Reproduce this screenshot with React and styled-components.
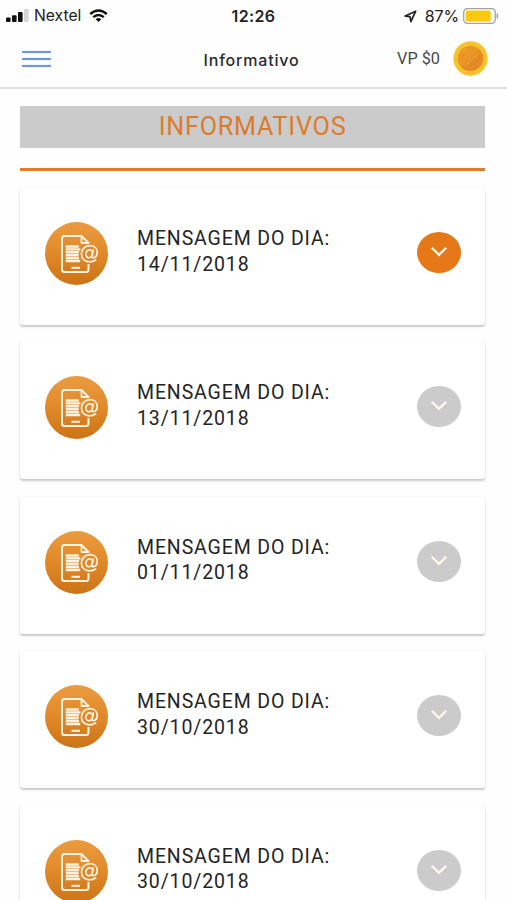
import React from "react";
import styled, { createGlobalStyle } from "styled-components";

const GlobalStyle = createGlobalStyle`
  * { box-sizing: border-box; }
  html, body { margin: 0; background: #fefefe; }
  body { height: 900px; overflow: hidden; font-family: Roboto, "Liberation Sans", sans-serif; }
  svg { display: block; flex: none; }
`;

const Screen = styled.div`
  width: 507px;
  height: 900px;
  overflow: hidden;
  background: #fefefe;
`;

const StatusBar = styled.div`
  display: grid;
  grid-template-columns: 1fr auto 1fr;
  align-items: center;
  height: 32px;
  padding: 0 8px 0 6px;
  font-family: Inter, "Liberation Sans", sans-serif;
  color: #222;
`;

const StatusGroup = styled.div`
  display: flex;
  align-items: center;
  justify-content: ${(p) => p.$align || "flex-start"};
`;

const Carrier = styled.span`
  margin: 0 8px 0 5px;
  font-size: 15.7px;
  line-height: 20px;
`;

const Clock = styled.span`
  padding-left: 2px;
  font-size: 16px;
  line-height: 20px;
  font-weight: 600;
  letter-spacing: 0.4px;
`;

const Percent = styled.span`
  margin: 0 4px 0 8px;
  font-size: 16px;
  line-height: 20px;
  letter-spacing: -0.1px;
`;

const Header = styled.header`
  display: grid;
  grid-template-columns: 1fr auto 1fr;
  align-items: center;
  height: 57px;
  padding: 0 19px 2px 22px;
  border-bottom: 2px solid #e1e1e1;
`;

const MenuButton = styled.button`
  display: flex;
  flex-direction: column;
  gap: 5px;
  width: 29px;
  padding: 0;
  border: 0;
  background: none;
`;

const MenuLine = styled.span`
  height: 2px;
  border-radius: 1px;
  background: #6b97d8;
  box-shadow: 0 0 1px #6b97d8;
`;

const PageName = styled.h1`
  margin: 2px 7px 0 0;
  font: 500 16px/20px Inter, "Liberation Sans", sans-serif;
  letter-spacing: 0.8px;
  color: #2b2b2b;
`;

const Wallet = styled.div`
  display: flex;
  align-items: center;
  justify-content: flex-end;
  gap: 13px;
  font-size: 16.3px;
  line-height: 20px;
  color: #484848;
`;

const Content = styled.main`
  padding: 17px 22px 0 20px;
`;

const Banner = styled.h2`
  display: flex;
  align-items: center;
  justify-content: center;
  height: 42px;
  margin: 0;
  padding-bottom: 2px;
  background: #cbcbcb;
  color: #dc7c2b;
  font-size: 25.2px;
  font-weight: 400;
  letter-spacing: 0.75px;
`;

const Rule = styled.div`
  height: 3px;
  margin: 20px 0 17px;
  background: #dc7e30;
`;

const CardList = styled.div`
  display: flex;
  flex-direction: column;
  gap: 17.4px;
`;

const Card = styled.article`
  display: flex;
  align-items: flex-start;
  height: 137px;
  padding: 34px 24px 0 25px;
  border-radius: 3px;
  background: #fff;
  box-shadow: 0 2px 2px rgba(0, 0, 0, 0.2), 0 0 2px rgba(0, 0, 0, 0.08);
`;

const CardText = styled.p`
  flex: 1;
  margin: 4px 0 0 29px;
  font-size: 19.5px;
  line-height: 25.7px;
  letter-spacing: 0.87px;
  color: #242424;
`;

const Toggle = styled.button`
  display: flex;
  align-items: center;
  justify-content: center;
  width: 44px;
  height: 41px;
  margin: 10px 0 0;
  padding: 0 0 2px;
  border: 0;
  border-radius: 50%;
  background: ${(p) => (p.$active ? "#e67817" : "#cbcbcb")};
`;

const Signal = () => (
  <svg width="23" height="14" viewBox="0 0 23 14">
    <rect x="0" y="8.5" width="4.6" height="4.5" rx="1" fill="#111" />
    <rect x="6" y="6.2" width="4.6" height="6.8" rx="1" fill="#111" />
    <rect x="12" y="3" width="4.6" height="10" rx="1" fill="#111" />
    <rect x="18" y="0" width="4.6" height="13" rx="1" fill="#d5d5d5" />
  </svg>
);

const Wifi = () => (
  <svg width="19" height="14" viewBox="0 0 19 14" fill="none" stroke="#111">
    <path d="M1.2 5Q9.5-2 17.8 5" strokeWidth="2.6" />
    <path d="M4.2 8.2Q9.5 3.6 14.8 8.2" strokeWidth="2.4" />
    <path d="M9.5 13 6.7 10.2Q9.5 8 12.3 10.2Z" fill="#111" stroke="none" />
  </svg>
);

const LocationArrow = () => (
  <svg width="13" height="13" viewBox="0 0 13 13" fill="none" stroke="#222" strokeWidth="1.7" strokeLinejoin="round">
    <path d="M11.7 1.2 1.2 6.1 6 6.7 6.9 11.7Z" />
  </svg>
);

const Battery = () => (
  <svg width="36" height="16" viewBox="0 0 36 16">
    <rect x=".7" y=".7" width="31.6" height="14.6" rx="3.6" fill="#fff" stroke="#a3a3a3" strokeWidth="1.3" />
    <rect x="2.7" y="2.5" width="25" height="11" rx="1.5" fill="#fac80d" />
    <path d="M34 5.6q1.8 2.4 0 4.8z" fill="#999" stroke="#999" strokeWidth=".7" />
  </svg>
);

const Coin = () => (
  <svg width="35" height="35" viewBox="0 0 35 35">
    <circle cx="17.5" cy="17.5" r="17.2" fill="#f8c62f" />
    <circle cx="17.5" cy="17.5" r="14.8" fill="none" stroke="#f5b529" strokeWidth=".8" />
    <circle cx="17.5" cy="17.5" r="12.8" fill="#eb9524" />
    <path d="M8.6 26.4A12.6 12.6 0 0 0 26.4 8.6Z" fill="#e48a22" />
    <path d="M12 25 26 12" stroke="#f3b64b" strokeWidth="1" />
    <path d="M8.5 11.5 13 7.5" stroke="#f3ad3c" strokeWidth="1" />
  </svg>
);

const MessageIcon = () => (
  <svg width="63" height="63" viewBox="0 0 63 63" fill="none">
    <defs>
      <linearGradient id="badge" x1="0" y1="0" x2="0" y2="1">
        <stop offset="0" stopColor="#eb9c40" />
        <stop offset=".55" stopColor="#df8727" />
        <stop offset="1" stopColor="#ca7418" />
      </linearGradient>
    </defs>
    <circle cx="31.5" cy="31.5" r="31.5" fill="url(#badge)" />
    <g stroke="#fff4e2" strokeWidth="2" strokeLinejoin="round">
      <path d="M43.5 22V21L36.5 14H19.5Q17 14 17 16.5V47.5Q17 50 19.5 50H41Q43.5 50 43.5 47.5V42" />
      <path d="M36.5 14V21H43.5" strokeWidth="1.8" />
      <path d="M26.5 45.8H35" strokeWidth="2" />
      <path d="M20.8 24.5H33.8M20.8 27.4H35.4M20.8 30.3H34M20.8 33.2H33.6M20.8 36.1H34M20.8 39H35.2" strokeWidth="2.4" />
    </g>
    <g stroke="#fff4e2" strokeWidth="1.7" strokeLinecap="round">
      <ellipse cx="44.2" cy="31.8" rx="3.3" ry="4" transform="rotate(18 44.2 31.8)" />
      <path d="M48.3 27.8 47 34Q46.8 36 48.6 35.7C51 35.2 52.3 32.5 52.2 30C52 26 48.8 23.7 45 23.7C40 23.7 36.4 27.3 36.4 32C36.4 36.8 39.8 39.8 44.3 39.8Q48 39.8 50.6 38" />
    </g>
  </svg>
);

const Chevron = () => (
  <svg width="18" height="11" viewBox="0 0 18 11" fill="none" stroke="#fffaf0" strokeWidth="2.3">
    <path d="M1.8 1.8 9 8.8 16.2 1.8" />
  </svg>
);

const messages = [
  { id: 1, date: "14/11/2018", active: true },
  { id: 2, date: "13/11/2018" },
  { id: 3, date: "01/11/2018" },
  { id: 4, date: "30/10/2018" },
  { id: 5, date: "30/10/2018" },
];

export default function App() {
  return (
    <Screen>
      <GlobalStyle />
      <StatusBar>
        <StatusGroup>
          <Signal />
          <Carrier>Nextel</Carrier>
          <Wifi />
        </StatusGroup>
        <Clock>12:26</Clock>
        <StatusGroup $align="flex-end">
          <LocationArrow />
          <Percent>87%</Percent>
          <Battery />
        </StatusGroup>
      </StatusBar>
      <Header>
        <MenuButton aria-label="Menu">
          <MenuLine />
          <MenuLine />
          <MenuLine />
        </MenuButton>
        <PageName>Informativo</PageName>
        <Wallet>
          <span>VP $0</span>
          <Coin />
        </Wallet>
      </Header>
      <Content>
        <Banner>INFORMATIVOS</Banner>
        <Rule />
        <CardList>
          {messages.map((m) => (
            <Card key={m.id}>
              <MessageIcon />
              <CardText>
                MENSAGEM DO DIA:
                <br />
                {m.date}
              </CardText>
              <Toggle $active={m.active} aria-label="Abrir mensagem">
                <Chevron />
              </Toggle>
            </Card>
          ))}
        </CardList>
      </Content>
    </Screen>
  );
}
